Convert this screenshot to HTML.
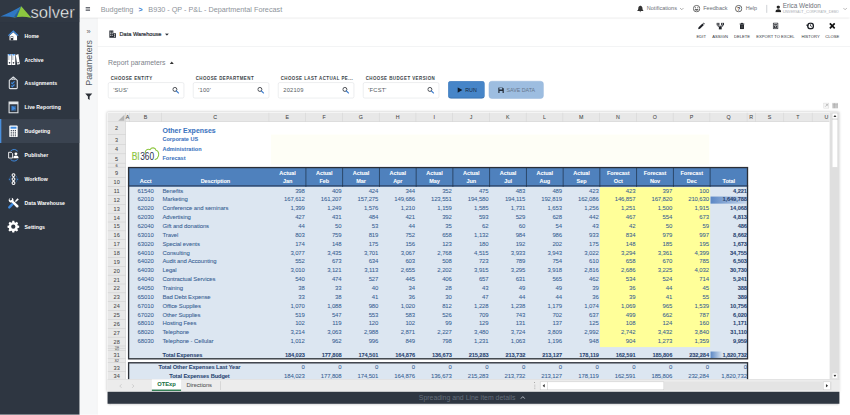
<!DOCTYPE html>
<html><head><meta charset="utf-8"><title>Budgeting</title>
<style>
*{box-sizing:border-box;margin:0;padding:0}
html,body{width:850px;height:415px;overflow:hidden;background:#fff}
body{font-family:"Liberation Sans",sans-serif;}
#root{position:absolute;left:0;top:0;width:1920px;height:937px;transform:scale(0.442708);transform-origin:0 0;background:#fff;overflow:hidden}
#root div,#root svg,#root span{position:absolute}
/* sidebar */
#side{left:0;top:0;width:180px;height:937px;background:#2e3641}
#logo{left:0;top:0;width:180px;height:50px;background:#303843}
.nav{left:0;width:180px;height:54px}
.nav.act{background:#3a4350;box-shadow:inset 3px 0 0 #4a8fdc}
.nav span{left:55.500px;top:0;line-height:55px;font-size:11.700px;font-weight:700;color:#fff;white-space:nowrap}
.nav svg{left:17px;top:14px}
/* top bar */
#top{left:180px;top:0;width:1740px;height:40px;background:#fff;box-shadow:0 1px 5px rgba(0,0,0,.28);z-index:5}
#top span{white-space:nowrap}
.bc{font-size:16.4px;color:#8e939a;top:0;line-height:40px}
.tr{font-size:12.5px;color:#6a6f77;top:0;line-height:39px}
/* params strip */
#strip{left:180px;top:40px;width:40px;height:897px;background:#f6f7f8;border-right:1px solid #ececec}
/* toolbar */
#tbline{left:220px;top:104px;width:1700px;height:1px;background:#e4e6e8}
.tb{font-size:9.4px;color:#30343b;white-space:nowrap;top:76px;line-height:12px;transform:translateX(-50%)}
.tbi{top:49px;transform:translateX(-50%)}
/* params */
.plab{font-size:10px;font-weight:700;letter-spacing:1px;color:#3a3f47;top:171.500px;line-height:12px;white-space:nowrap}
.pin{top:186px;width:172px;height:35.500px;border:1px solid #d6d9dd;border-radius:4px;background:#fff}
.pin span{left:11px;top:0;line-height:34.500px;font-size:13px;letter-spacing:.4px;color:#555b63}
.pin svg{right:10px;top:9px}
/* sheet */
#sheet{-webkit-text-stroke:.12px;left:242px;top:253px;width:1654px;border-left:1px solid #e3e3e3;border-top:1px solid #e3e3e3;background:#fff;box-shadow:0 0 6px rgba(0,0,0,.25)}
#grid{left:0;top:0;width:1631px;height:603.0px;overflow:hidden;background:#fff}
.ch{background:#e8e8e8;border-bottom:1px solid #c8c8c8}
.corner{left:0;top:0;width:41px;height:21px;border-right:1px solid #c8c8c8}
.corner:after{content:"";position:absolute;right:2px;bottom:2.500px;border-left:14.500px solid transparent;border-bottom:14.500px solid #b4b4b4}
.cl{top:0;height:21px;line-height:22.500px;text-align:center;font-size:12px;color:#444;border-right:1px solid #d0d0d0}
.rhbg{left:0;width:41px;background:#e8e8e8;border-right:1px solid #c8c8c8}
.rl{left:0;width:41px;text-align:center;font-size:12.5px;color:#4a4a4a;border-bottom:1px solid #c8c8c8;overflow:hidden}
.rl.sm{font-size:9px}
.t1{font-size:15.8px;font-weight:700;color:#3b74bf;white-space:nowrap;margin-top:2px}
.t2{font-size:12.500px;font-weight:700;color:#3b74bf;white-space:nowrap}
.thead{background:#4f81bd}
.tbody{background:#dce6f1}
.yel{background:#ffff99}
.ht{height:20px;line-height:24.500px;text-align:center;color:#fff;font-weight:700;font-size:12.5px;white-space:nowrap;letter-spacing:-.2px}
.vs{width:1.5px;background:#27405f}
.hline{height:2.500px;background:#1c2940}
.c{height:20px;line-height:18.400px;font-size:13.500px;letter-spacing:-.25px;color:#366092;white-space:nowrap}
.c.ctr{text-align:center}
.c.r{text-align:right}
.c.b{font-weight:700;color:#2a4572;font-size:12.900px;letter-spacing:-.25px}
.c.up{line-height:21.800px}
.c.t31{line-height:21px}
.bar2{background:linear-gradient(90deg,#5b87c5,rgba(197,214,236,0))}
.bar{background:linear-gradient(90deg,#5b87c5,#c5d6ec)}
.tbord{border:3px solid #2b2f36;border-right-width:3px}
/* tabs */
#tabs{left:0;top:603.0px;width:1653px;height:28px;background:#ececec;border-top:1px solid #d0d0d0}
#vs{left:1631px;top:0;width:22px;height:603.0px;background:#dfdfdf}
#dark{left:243px;width:1653px;height:26.500px;background:#2e3641;box-shadow:0 2px 5px rgba(0,0,0,.3)}
</style></head>
<body>
<div id="root">

<!-- sidebar -->
<div id="side">
 <div id="logo">
  <svg style="left:0;top:0" width="180" height="50" viewBox="0 0 180 50">
   <path d="M1 37.500 C16 31 34 22 48 14 L31 39.500 C21 36.500 11 36.800 1 37.500Z" fill="#2f77c4"/>
   <path d="M48 14 L71 40.500 C58 37 44 37.500 31 39.500Z" fill="#8cc63f"/>
   <path d="M48 14 L31 39.500 L38 38.600Z" fill="#1d5ba6"/>
   <text x="69" y="39.800" font-family="Liberation Sans" font-size="38" fill="#fff" stroke="#303843" stroke-width=".9" textLength="100" lengthAdjust="spacingAndGlyphs">solver</text>
  </svg>
 </div>
 <div class="nav" style="top:53px"><svg width="27" height="27" viewBox="0 0 27 27" style="overflow:visible"><path d="M1 12.500L13 1.500l12 11-1.800 2L13 5.200 2.800 14.500z" fill="#3f8be0"/><path d="M4.500 13.500L13 6l8.500 7.500V24h-17z" fill="#fff"/><path d="M7 15h6v9H7z" fill="#2e3641"/><path d="M8 16h4v3H8z" fill="#fff"/></svg><span>Home</span></div>
<div class="nav" style="top:107px"><svg width="27" height="27" viewBox="0 0 27 27" style="overflow:visible"><path d="M0.500 1h8v25h-8zM9.500 1h8v25h-8zM18.500 3l6-1.800 3.500 22.500-6 1.800z" fill="#fff"/><path d="M2 1h5v3.500H2zM11 1h5v3.500h-5z" fill="#3f8be0"/><path d="M2.300 5.500h1.600v9H2.300zM11.300 5.500h1.600v9h-1.600z" fill="#9aa3ad"/><circle cx="4.500" cy="21" r="1.800" fill="#2e3641"/><circle cx="13.500" cy="21" r="1.800" fill="#2e3641"/><circle cx="24" cy="20.500" r="1.600" fill="#2e3641"/></svg><span>Archive</span></div>
<div class="nav" style="top:161px"><svg width="27" height="27" viewBox="0 0 27 27" style="overflow:visible"><path d="M4 6.500L13 -1L22 6.500V23.300Q22 25.200 20.200 25.200H5.800Q4 25.200 4 23.300Z" fill="none" stroke="#dde1e5" stroke-width="2.500" stroke-linejoin="round"/><path d="M7.500 5.500L13 1l5.500 4.500z" fill="#c9ced4"/><circle cx="13" cy="3.800" r="1" fill="#2e3641"/><path d="M8.500 11.500l2.300 2.300 5-5M8.500 18.500l2.300 2.300 5-5" fill="none" stroke="#3f8be0" stroke-width="2.600"/></svg><span>Assignments</span></div>
<div class="nav" style="top:215px"><svg width="27" height="27" viewBox="0 0 27 27" style="overflow:visible"><path d="M3.500 1.500h20v24h-20z" fill="none" stroke="#e4e7ea" stroke-width="2.400"/><path d="M3.500 1.500h20v5h-20z" fill="#e4e7ea"/><path d="M8 10h11v11H8z" fill="#3f8be0" opacity=".55"/><path d="M10.500 10.500l8 5-8 5z" fill="#3f8be0"/></svg><span>Live Reporting</span></div>
<div class="nav act" style="top:269px"><svg width="27" height="27" viewBox="0 0 27 27" style="overflow:visible"><path d="M6 0.500h15c1.200 0 2 .8 2 2v22c0 1.200-.8 2-2 2H6c-1.200 0-2-.8-2-2v-22c0-1.200.8-2 2-2z" fill="#fff"/><path d="M6.800 3.200h13.400v4.600H6.800z" fill="#3f8be0"/><rect x="7.2" y="10.5" width="2.600" height="2.400" fill="#3a4350"/><rect x="11.8" y="10.5" width="2.600" height="2.400" fill="#3a4350"/><rect x="16.4" y="10.5" width="2.600" height="2.400" fill="#3a4350"/><rect x="7.2" y="14.5" width="2.600" height="2.400" fill="#3a4350"/><rect x="11.8" y="14.5" width="2.600" height="2.400" fill="#3a4350"/><rect x="16.4" y="14.5" width="2.600" height="2.400" fill="#3a4350"/><rect x="7.2" y="18.5" width="2.600" height="2.400" fill="#3a4350"/><rect x="11.8" y="18.5" width="2.600" height="2.400" fill="#3a4350"/><rect x="16.4" y="18.5" width="2.600" height="2.400" fill="#3a4350"/><rect x="7.2" y="22.5" width="2.600" height="2.400" fill="#3a4350"/><rect x="11.8" y="22.5" width="2.600" height="2.400" fill="#3a4350"/><rect x="16.4" y="22.5" width="2.600" height="2.400" fill="#3a4350"/></svg><span>Budgeting</span></div>
<div class="nav" style="top:323px"><svg width="27" height="27" viewBox="0 0 27 27" style="overflow:visible"><path d="M2.500 7h6l3 3v10h-9z" fill="none" stroke="#fff" stroke-width="2"/><circle cx="19" cy="10.500" r="3.300" fill="#fff"/><path d="M13 20.500c0-4.500 2.500-6 6-6s6 1.500 6 6z" fill="#fff"/><path d="M7 4A12 12 0 0 1 23 4.500M23 23A12 12 0 0 1 7 23.500" fill="none" stroke="#3f8be0" stroke-width="2.200"/></svg><span>Publisher</span></div>
<div class="nav" style="top:377px"><svg width="27" height="27" viewBox="0 0 27 27" style="overflow:visible"><circle cx="13.500" cy="4.500" r="3.200" fill="none" stroke="#fff" stroke-width="2.400"/><circle cx="13.500" cy="13.500" r="3.200" fill="none" stroke="#fff" stroke-width="2.400"/><circle cx="13.500" cy="22.500" r="3.200" fill="none" stroke="#fff" stroke-width="2.400"/><path d="M13.500 7.700v2.600M13.500 16.700v2.600" stroke="#fff" stroke-width="2"/><path d="M7.500 6.500C5 9 5 18 7.500 20.500M19.500 6.500C22 9 22 18 19.500 20.500" fill="none" stroke="#3f8be0" stroke-width="1.500" stroke-dasharray="2.500 1.500"/><path d="M3 12l3.500 2-3.500 2zM24 12l-3.500 2 3.500 2z" fill="#3f8be0"/></svg><span>Workflow</span></div>
<div class="nav" style="top:431px"><svg width="27" height="27" viewBox="0 0 27 27" style="overflow:visible"><path d="M4 23.500L14 13.500" stroke="#3f8be0" stroke-width="5.500" stroke-linecap="round"/><path d="M7 1.500c-3 .8-5 3.800-4.200 7 .8 3 3.800 4.800 7 4l10 10.500c1.200 1.200 3 1.200 4.200 0s1.200-3 0-4.200L13.500 8.800c.8-3-.800-6-3.800-7l.300 4.500-3.500 1.500-2.200-2.600z" fill="#fff"/><path d="M16.500 9.500l6-6.500 3 2.500-6.500 6z" fill="#fff"/><path d="M14 14.500l3-3" stroke="#fff" stroke-width="2.500"/></svg><span>Data Warehouse</span></div>
<div class="nav" style="top:485px"><svg width="27" height="27" viewBox="0 0 27 27" style="overflow:visible"><path d="M10.800 1h4.400l.7 3.300 2.100.9 2.900-1.900 3.100 3.100-1.900 2.900.9 2.100 3.300.7v4.400l-3.300.7-.9 2.100 1.900 2.900-3.100 3.100-2.900-1.900-2.100.9-.7 3.300h-4.400l-.7-3.300-2.100-.9-2.900 1.900-3.100-3.100 1.900-2.900-.9-2.100L0 16.500v-4.400l3.300-.7.900-2.100-1.900-2.900 3.100-3.100 2.900 1.900 2.100-.9z" fill="#fff" transform="translate(0,-1.300)"/><circle cx="13" cy="13" r="4.800" fill="#2e3641"/></svg><span>Settings</span></div>
</div>

<!-- strip -->
<div id="strip">
 <span style="left:0;top:20px;width:40px;text-align:center;font-size:17px;line-height:24px;color:#666">&raquo;</span>
 <span style="left:20px;top:102px;font-size:20px;color:#575c63;white-space:nowrap;transform:translate(-50%,-50%) rotate(-90deg);line-height:24px">Parameters</span>
 <svg style="left:11.500px;top:170px" width="17" height="17" viewBox="0 0 18 18"><path d="M0.5 1h17L11 8.5V17L7 14V8.5Z" fill="#2b2f36"/></svg>
</div>

<!-- top bar -->
<div id="top">
 <svg style="left:13px;top:15.500px" width="10.500" height="9" viewBox="0 0 10.500 9"><path d="M0 1h10.500M0 4.500h10.500M0 8h10.500" stroke="#4a4f57" stroke-width="1.900"/></svg>
 <span class="bc" style="left:47.5px">Budgeting</span>
 <span class="bc" style="left:133px;top:1.500px;color:#3f7fd0;font-size:16px;font-weight:700">&gt;</span>
 <span class="bc" style="left:155px">B930 - QP - P&amp;L - Departmental Forecast</span>

 <svg style="left:1259px;top:12px" width="15" height="16" viewBox="0 0 15 16"><path d="M7.5 0.5c.8 0 1.3.6 1.3 1.3 2.2.6 3.4 2.5 3.4 5 0 3 1 4.2 2.3 5.2v1H.5v-1c1.300-1 2.300-2.200 2.300-5.200 0-2.500 1.200-4.400 3.400-5 0-.7.500-1.300 1.300-1.300zM5.700 14h3.600c0 1-.800 1.800-1.800 1.800s-1.800-.8-1.800-1.800z" fill="#333"/></svg>
 <span class="tr" style="left:1281px">Notifications</span>
 <svg style="left:1355px;top:17px" width="10" height="7" viewBox="0 0 10 7"><path d="M1 1l4 4 4-4" stroke="#777" stroke-width="1.3" fill="none"/></svg>
 <svg style="left:1385px;top:11px" width="17" height="17" viewBox="0 0 17 17"><circle cx="8.500" cy="8.500" r="7.300" fill="none" stroke="#333" stroke-width="1.600"/><circle cx="5.800" cy="6.500" r="1.200" fill="#333"/><circle cx="11.200" cy="6.500" r="1.200" fill="#333"/><path d="M4.300 9.800c.8 2.200 2.400 3.200 4.200 3.200s3.400-1 4.200-3.200z" fill="#333"/></svg>
 <span class="tr" style="left:1408.500px">Feedback</span>
 <svg style="left:1480px;top:11px" width="17" height="17" viewBox="0 0 17 17"><circle cx="8.500" cy="8.500" r="7.300" fill="none" stroke="#333" stroke-width="1.600"/><text x="8.500" y="12.800" text-anchor="middle" font-family="Liberation Sans" font-weight="700" font-size="12" fill="#333">?</text></svg>
 <span class="tr" style="left:1504.500px">Help</span>
 <div style="left:1551px;top:11px;width:1.500px;height:18px;background:#c9ccd0"></div>
 <svg style="left:1571px;top:12px" width="14" height="16" viewBox="0 0 14 16"><circle cx="7" cy="4" r="3.800" fill="#222"/><path d="M0.500 15.500c0-4.500 2.500-6.500 6.500-6.500s6.500 2 6.500 6.500z" fill="#222"/></svg>
 <span style="left:1588px;top:3px;font-size:14.500px;line-height:20px;color:#6a6f77">Erica Weldon</span>
 <span style="left:1588px;top:21px;font-size:9.600px;line-height:12px;color:#a9adb3;font-variant:small-caps;letter-spacing:0">UniversalT_Corporate_Demo</span>
 <svg style="left:1724px;top:17px" width="10" height="7" viewBox="0 0 10 7"><path d="M1 1l4 4 4-4" stroke="#888" stroke-width="1.300" fill="none"/></svg>
</div>

<!-- toolbar row -->
<svg style="left:246px;top:68px" width="17" height="18" viewBox="0 0 17 18"><path d="M1 1h9v16H1zM10 7h6v10h-6z" fill="#2b2f36"/><path d="M3 3.500h2v2H3zM6.500 3.500h2v2h-2zM3 7h2v2H3zM6.500 7h2v2h-2zM3 10.500h2v2H3zM6.500 10.500h2v2h-2zM12 9.500h2v2h-2zM12 13h2v2h-2z" fill="#fff"/></svg>
<span style="left:270px;top:68px;line-height:19px;font-size:12.700px;font-weight:400;-webkit-text-stroke:.45px;color:#2b2f36;white-space:nowrap">Data Warehouse</span>
<svg style="left:372px;top:75px" width="10" height="6" viewBox="0 0 10 6"><path d="M0.500 0.500h9L5 5.500z" fill="#2b2f36"/></svg>
<div id="tbline"></div>

<!-- toolbar icons -->
<svg class="tbi" style="left:1584px;top:50.500px" width="16" height="16" viewBox="0 0 16 16"><path d="M1 15l1-4.200L10.800 2l3.200 3.200L5.200 14zM11.800 1l.8-.8c.4-.4 1-.4 1.400 0l1.800 1.800c.4.400.4 1 0 1.400l-.8.800z" fill="#1d2026"/></svg>
<svg class="tbi" style="left:1626.500px;top:50.500px" width="18" height="16" viewBox="0 0 18 16"><path d="M0.500 0.500h6.500v5.500H0.500zM11 0.500h6.500v5.500H11zM5.800 10h6.400v5.500H5.800z" fill="#1d2026"/><path d="M3.700 6v2.200h10.600V6M9 8.200V10" fill="none" stroke="#1d2026" stroke-width="2"/><path d="M2.500 2.300h2.500v1.800H2.500zM13 2.300h2.500v1.800H13z" fill="#fff"/></svg>
<svg class="tbi" style="left:1676px;top:51px" width="12" height="15" viewBox="0 0 12 15"><path d="M0.500 2h11v2.200h-11zM4 0.300h4v2H4zM1.500 5h9v8.500c0 .8-.6 1.500-1.400 1.500H2.900c-.8 0-1.400-.7-1.400-1.500z" fill="#1d2026"/><path d="M4.500 6.500v6.500M7.500 6.500v6.500" stroke="#777" stroke-width="1"/></svg>
<svg class="tbi" style="left:1751.500px;top:51px" width="13" height="15" viewBox="0 0 13 15"><path d="M1.200 1h10.600v13H1.200z" fill="#fff" stroke="#1d2026" stroke-width="2"/><path d="M3 3h7v1.800H3zM3 6.500h7v6H3z" fill="#1d2026"/><path d="M4.800 8l3.400 3M8.200 8l-3.400 3" stroke="#fff" stroke-width="1.200"/></svg>
<svg class="tbi" style="left:1830px;top:50px" width="19" height="17" viewBox="0 0 19 17"><circle cx="10.500" cy="8.500" r="6.400" fill="none" stroke="#1d2026" stroke-width="3"/><path d="M0 6h6.500L3.300 10.500z" fill="#1d2026"/><path d="M10.500 5V8.800l2.600 1.600" fill="none" stroke="#1d2026" stroke-width="1.900"/></svg>
<svg class="tbi" style="left:1880px;top:51px" width="15" height="15" viewBox="0 0 15 15"><path d="M2 2l11 11M13 2L2 13" stroke="#111" stroke-width="3.800"/></svg>
<span class="tb" style="left:1584px">EDIT</span>
<span class="tb" style="left:1626.500px">ASSIGN</span>
<span class="tb" style="left:1676px">DELETE</span>
<span class="tb" style="left:1751.500px">EXPORT TO EXCEL</span>
<span class="tb" style="left:1831px">HISTORY</span>
<span class="tb" style="left:1880px">CLOSE</span>

<!-- report parameters -->
<span style="left:244px;top:131px;line-height:21px;font-size:15.600px;color:#7d828a;white-space:nowrap">Report parameters</span>
<svg style="left:383px;top:138px" width="10" height="7" viewBox="0 0 10 7"><path d="M0.500 6.500h9L5 1z" fill="#333"/></svg>
<span class="plab" style="left:250px">CHOOSE ENTITY</span>
<div class="pin" style="left:244px"><span>'SUS'</span><svg width="16" height="16" viewBox="0 0 16 16"><circle cx="6" cy="6" r="4.500" fill="none" stroke="#2b2f36" stroke-width="1.900"/><path d="M9.500 9.500l5 5" stroke="#3f7fd0" stroke-width="2.600" stroke-linecap="round"/></svg></div>
<span class="plab" style="left:442px">CHOOSE DEPARTMENT</span>
<div class="pin" style="left:436px"><span>'100'</span><svg width="16" height="16" viewBox="0 0 16 16"><circle cx="6" cy="6" r="4.500" fill="none" stroke="#2b2f36" stroke-width="1.900"/><path d="M9.500 9.500l5 5" stroke="#3f7fd0" stroke-width="2.600" stroke-linecap="round"/></svg></div>
<span class="plab" style="left:634px">CHOOSE LAST ACTUAL PE...</span>
<div class="pin" style="left:628px"><span>202109</span><svg width="16" height="16" viewBox="0 0 16 16"><circle cx="6" cy="6" r="4.500" fill="none" stroke="#2b2f36" stroke-width="1.900"/><path d="M9.500 9.500l5 5" stroke="#3f7fd0" stroke-width="2.600" stroke-linecap="round"/></svg></div>
<span class="plab" style="left:826px">CHOOSE BUDGET VERSION</span>
<div class="pin" style="left:820px"><span>'FCST'</span><svg width="16" height="16" viewBox="0 0 16 16"><circle cx="6" cy="6" r="4.500" fill="none" stroke="#2b2f36" stroke-width="1.900"/><path d="M9.500 9.500l5 5" stroke="#3f7fd0" stroke-width="2.600" stroke-linecap="round"/></svg></div>
<div style="left:1012px;top:183px;width:83px;height:40px;border-radius:7px;background:#4685c8;border:1.500px solid #3b78bb;border-bottom:2.500px solid #3068a8">
 <svg style="left:20px;top:12.500px" width="12" height="13" viewBox="0 0 12 13"><path d="M0.500 0.300l11 6.200-11 6.200z" fill="#0d1a2b"/></svg>
 <span style="left:38px;top:0;line-height:40px;font-size:12px;color:#14253b">RUN</span>
</div>
<div style="left:1104px;top:183px;width:124px;height:40px;border-radius:7px;background:#9dbde0;border:1.500px solid #93b5da">
 <svg style="left:20px;top:12.500px" width="13.500" height="13.500" viewBox="0 0 13 13"><path d="M0.500 0.500h9.500l2.500 2.500v9.500H0.500z" fill="#252d38"/><path d="M3 1.500h6v3.500H3zM3.200 8.500h6.600v4H3.200z" fill="#9dbde0"/></svg>
 <span style="left:39px;top:0;line-height:40px;font-size:12px;color:#66768b;white-space:nowrap">SAVE DATA</span>
</div>

<!-- small icons above sheet -->
<svg style="left:1859.500px;top:232px" width="13" height="13" viewBox="0 0 13 13"><rect x="0.500" y="0.500" width="12" height="12" fill="#f4f4f4" stroke="#bdbdbd"/><path d="M4 9l5-5M6 4h3v3" stroke="#8a8a8a" fill="none"/></svg>
<svg style="left:1880px;top:232px" width="13" height="13" viewBox="0 0 13 13"><rect x="0.500" y="0.500" width="12" height="12" fill="#d9d9d9" stroke="#b5b5b5"/><path d="M0.500 4h12M0.500 7h12M0.500 10h12M4.500 0.500v12" stroke="#9a9a9a"/></svg>

<!-- sheet -->
<div id="sheet" style="height:calc(603.0px + 29px)">
 <div id="grid">
<div class="ch" style="left:0;top:0;width:1631px;height:21px"></div>
<div class="corner"></div>
<div class="cl" style="left:41px;width:9px">A</div>
<div class="cl" style="left:50px;width:72px">B</div>
<div class="cl" style="left:122px;width:243px">C</div>
<div class="cl" style="left:365px;width:83px">E</div>
<div class="cl" style="left:448px;width:83px">F</div>
<div class="cl" style="left:531px;width:83px">G</div>
<div class="cl" style="left:614px;width:83px">H</div>
<div class="cl" style="left:697px;width:83px">I</div>
<div class="cl" style="left:780px;width:83px">J</div>
<div class="cl" style="left:863px;width:83px">K</div>
<div class="cl" style="left:946px;width:83px">L</div>
<div class="cl" style="left:1029px;width:83px">M</div>
<div class="cl" style="left:1112px;width:83px">N</div>
<div class="cl" style="left:1195px;width:83px">O</div>
<div class="cl" style="left:1278px;width:83px">P</div>
<div class="cl" style="left:1361px;width:84px">Q</div>
<div class="cl" style="left:1445px;width:19px">R</div>
<div class="cl" style="left:1464px;width:64px">S</div>
<div class="cl" style="left:1528px;width:64px">T</div>
<div class="cl" style="left:1592px;width:64px">U</div>
<div class="rhbg" style="top:21px;height:582.0px"></div>
<div class="rl" style="top:21px;height:28.5px;line-height:31.5px">2</div>
<div class="rl" style="top:49.5px;height:23px;line-height:24px">3</div>
<div class="rl" style="top:72.5px;height:21px;line-height:22px">4</div>
<div class="rl" style="top:93.5px;height:21.5px;line-height:22.5px">5</div>
<div class="rl sm" style="top:115.0px;height:9px;line-height:10px">6</div>
<div class="rl" style="top:124.0px;height:23px;line-height:27.5px">9</div>
<div class="rl" style="top:147.0px;height:20.5px;line-height:20.5px">10</div>
<div class="rl" style="top:167.5px;height:20px;line-height:20px">11</div>
<div class="rl" style="top:187.5px;height:20px;line-height:20px">12</div>
<div class="rl" style="top:207.5px;height:20px;line-height:20px">13</div>
<div class="rl" style="top:227.5px;height:20px;line-height:20px">14</div>
<div class="rl" style="top:247.5px;height:20px;line-height:20px">15</div>
<div class="rl" style="top:267.5px;height:20px;line-height:20px">16</div>
<div class="rl" style="top:287.5px;height:20px;line-height:20px">17</div>
<div class="rl" style="top:307.5px;height:20px;line-height:20px">18</div>
<div class="rl" style="top:327.5px;height:20px;line-height:20px">19</div>
<div class="rl" style="top:347.5px;height:20px;line-height:20px">20</div>
<div class="rl" style="top:367.5px;height:20px;line-height:20px">21</div>
<div class="rl" style="top:387.5px;height:20px;line-height:20px">22</div>
<div class="rl" style="top:407.5px;height:20px;line-height:20px">23</div>
<div class="rl" style="top:427.5px;height:20px;line-height:20px">24</div>
<div class="rl" style="top:447.5px;height:20px;line-height:20px">25</div>
<div class="rl" style="top:467.5px;height:20px;line-height:20px">26</div>
<div class="rl" style="top:487.5px;height:20px;line-height:20px">27</div>
<div class="rl" style="top:507.5px;height:20px;line-height:20px">28</div>
<div class="rl sm" style="top:527.5px;height:5px;line-height:6px">29</div>
<div class="rl sm" style="top:532.5px;height:5px;line-height:6px">30</div>
<div class="rl" style="top:537.5px;height:19px;line-height:21.5px">31</div>
<div class="rl sm" style="top:556.5px;height:8.5px;line-height:9.5px">32</div>
<div class="rl" style="top:565.0px;height:19.5px;line-height:25.0px">33</div>
<div class="rl" style="top:584.5px;height:18.5px;line-height:22.0px">34</div>
<div style="position:absolute;left:369px;top:49.5px;width:990px;height:68.5px;background:#fefef6"></div>
<div class="t1" style="left:124px;top:21px;height:28.5px;line-height:35.5px">Other Expenses</div>
<div class="t2" style="left:124px;top:49.5px;height:23px;line-height:20.5px">Corporate US</div>
<div class="t2" style="left:124px;top:72.5px;height:21px;line-height:18.5px">Administration</div>
<div class="t2" style="left:124px;top:93.5px;height:21.5px;line-height:19.0px">Forecast</div>
<svg style="position:absolute;left:50px;top:76px" width="72" height="34" viewBox="50 76 72 34">
<path d="M85 91.500 C84.500 85.500 90 81.500 96 84 C99 78.500 107.500 78.500 109.500 85.500 C114.500 86.500 116.500 92 115 98 C114 102 111.500 105 107.500 106.300" fill="none" stroke="#8dc63f" stroke-width="2.400" stroke-linecap="round"/>
<text x="54.600" y="106.900" font-family="Liberation Sans" font-size="22.800" fill="#8dc63f" stroke="#8dc63f" stroke-width=".5" textLength="18" lengthAdjust="spacingAndGlyphs">BI</text>
<text x="73.600" y="106.900" font-family="Liberation Sans" font-size="22.800" fill="#27324d" textLength="31.500" lengthAdjust="spacingAndGlyphs">360</text>
</svg>
<div class="thead" style="left:46px;top:124.0px;width:1400px;height:43.5px"></div>
<div class="tbody" style="left:46px;top:167.5px;width:1401px;height:389.0px"></div>
<div class="yel" style="left:1112px;top:168.5px;width:249px;height:361.0px"></div>
<div class="ht" style="left:50px;top:144.0px;width:72px">Acct</div>
<div class="ht" style="left:122px;top:144.0px;width:243px">Description</div>
<div class="ht" style="left:365px;top:125.0px;width:83px">Actual</div>
<div class="ht" style="left:365px;top:144.0px;width:83px">Jan</div>
<div class="vs" style="left:447px;top:124.0px;height:43.5px"></div>
<div class="ht" style="left:448px;top:125.0px;width:83px">Actual</div>
<div class="ht" style="left:448px;top:144.0px;width:83px">Feb</div>
<div class="vs" style="left:530px;top:124.0px;height:43.5px"></div>
<div class="ht" style="left:531px;top:125.0px;width:83px">Actual</div>
<div class="ht" style="left:531px;top:144.0px;width:83px">Mar</div>
<div class="vs" style="left:613px;top:124.0px;height:43.5px"></div>
<div class="ht" style="left:614px;top:125.0px;width:83px">Actual</div>
<div class="ht" style="left:614px;top:144.0px;width:83px">Apr</div>
<div class="vs" style="left:696px;top:124.0px;height:43.5px"></div>
<div class="ht" style="left:697px;top:125.0px;width:83px">Actual</div>
<div class="ht" style="left:697px;top:144.0px;width:83px">May</div>
<div class="vs" style="left:779px;top:124.0px;height:43.5px"></div>
<div class="ht" style="left:780px;top:125.0px;width:83px">Actual</div>
<div class="ht" style="left:780px;top:144.0px;width:83px">Jun</div>
<div class="vs" style="left:862px;top:124.0px;height:43.5px"></div>
<div class="ht" style="left:863px;top:125.0px;width:83px">Actual</div>
<div class="ht" style="left:863px;top:144.0px;width:83px">Jul</div>
<div class="vs" style="left:945px;top:124.0px;height:43.5px"></div>
<div class="ht" style="left:946px;top:125.0px;width:83px">Actual</div>
<div class="ht" style="left:946px;top:144.0px;width:83px">Aug</div>
<div class="vs" style="left:1028px;top:124.0px;height:43.5px"></div>
<div class="ht" style="left:1029px;top:125.0px;width:83px">Actual</div>
<div class="ht" style="left:1029px;top:144.0px;width:83px">Sep</div>
<div class="vs" style="left:1111px;top:124.0px;height:43.5px"></div>
<div class="ht" style="left:1112px;top:125.0px;width:83px">Forecast</div>
<div class="ht" style="left:1112px;top:144.0px;width:83px">Oct</div>
<div class="vs" style="left:1194px;top:124.0px;height:43.5px"></div>
<div class="ht" style="left:1195px;top:125.0px;width:83px">Forecast</div>
<div class="ht" style="left:1195px;top:144.0px;width:83px">Nov</div>
<div class="vs" style="left:1277px;top:124.0px;height:43.5px"></div>
<div class="ht" style="left:1278px;top:125.0px;width:83px">Forecast</div>
<div class="ht" style="left:1278px;top:144.0px;width:83px">Dec</div>
<div class="vs" style="left:1360px;top:124.0px;height:43.5px"></div>
<div class="ht" style="left:1361px;top:144.0px;width:84px">Total</div>
<div class="hline" style="left:46px;top:164.5px;width:1401px"></div>
<div class="c ctr" style="left:50px;top:167.5px;width:72px">61540</div>
<div class="c" style="left:124px;top:167.5px">Benefits</div>
<div class="c r" style="left:365px;top:167.5px;width:80.5px">398</div>
<div class="c r" style="left:448px;top:167.5px;width:80.5px">409</div>
<div class="c r" style="left:531px;top:167.5px;width:80.5px">424</div>
<div class="c r" style="left:614px;top:167.5px;width:80.5px">344</div>
<div class="c r" style="left:697px;top:167.5px;width:80.5px">352</div>
<div class="c r" style="left:780px;top:167.5px;width:80.5px">475</div>
<div class="c r" style="left:863px;top:167.5px;width:80.5px">483</div>
<div class="c r" style="left:946px;top:167.5px;width:80.5px">489</div>
<div class="c r" style="left:1029px;top:167.5px;width:80.5px">423</div>
<div class="c r" style="left:1112px;top:167.5px;width:80.5px">423</div>
<div class="c r" style="left:1195px;top:167.5px;width:80.5px">397</div>
<div class="c r" style="left:1278px;top:167.5px;width:80.5px">100</div>
<div class="c r b" style="left:1361px;top:167.5px;width:83px">4,221</div>
<div class="c ctr" style="left:50px;top:187.5px;width:72px">62010</div>
<div class="c" style="left:124px;top:187.5px">Marketing</div>
<div class="c r" style="left:365px;top:187.5px;width:80.5px">167,612</div>
<div class="c r" style="left:448px;top:187.5px;width:80.5px">161,207</div>
<div class="c r" style="left:531px;top:187.5px;width:80.5px">157,275</div>
<div class="c r" style="left:614px;top:187.5px;width:80.5px">149,686</div>
<div class="c r" style="left:697px;top:187.5px;width:80.5px">123,551</div>
<div class="c r" style="left:780px;top:187.5px;width:80.5px">194,580</div>
<div class="c r" style="left:863px;top:187.5px;width:80.5px">194,115</div>
<div class="c r" style="left:946px;top:187.5px;width:80.5px">192,819</div>
<div class="c r" style="left:1029px;top:187.5px;width:80.5px">162,086</div>
<div class="c r" style="left:1112px;top:187.5px;width:80.5px">146,857</div>
<div class="c r" style="left:1195px;top:187.5px;width:80.5px">167,820</div>
<div class="c r" style="left:1278px;top:187.5px;width:80.5px">210,630</div>
<div class="bar" style="left:1362px;top:189.5px;width:81.0px;height:16px"></div>
<div class="c r b" style="left:1361px;top:187.5px;width:83px">1,649,788</div>
<div class="c ctr" style="left:50px;top:207.5px;width:72px">62020</div>
<div class="c" style="left:124px;top:207.5px">Conference and seminars</div>
<div class="c r" style="left:365px;top:207.5px;width:80.5px">1,399</div>
<div class="c r" style="left:448px;top:207.5px;width:80.5px">1,249</div>
<div class="c r" style="left:531px;top:207.5px;width:80.5px">1,576</div>
<div class="c r" style="left:614px;top:207.5px;width:80.5px">1,210</div>
<div class="c r" style="left:697px;top:207.5px;width:80.5px">1,159</div>
<div class="c r" style="left:780px;top:207.5px;width:80.5px">1,585</div>
<div class="c r" style="left:863px;top:207.5px;width:80.5px">1,731</div>
<div class="c r" style="left:946px;top:207.5px;width:80.5px">1,653</div>
<div class="c r" style="left:1029px;top:207.5px;width:80.5px">1,256</div>
<div class="c r" style="left:1112px;top:207.5px;width:80.5px">1,251</div>
<div class="c r" style="left:1195px;top:207.5px;width:80.5px">1,500</div>
<div class="c r" style="left:1278px;top:207.5px;width:80.5px">1,915</div>
<div class="c r b" style="left:1361px;top:207.5px;width:83px">14,068</div>
<div class="c ctr" style="left:50px;top:227.5px;width:72px">62030</div>
<div class="c" style="left:124px;top:227.5px">Advertising</div>
<div class="c r" style="left:365px;top:227.5px;width:80.5px">427</div>
<div class="c r" style="left:448px;top:227.5px;width:80.5px">431</div>
<div class="c r" style="left:531px;top:227.5px;width:80.5px">484</div>
<div class="c r" style="left:614px;top:227.5px;width:80.5px">421</div>
<div class="c r" style="left:697px;top:227.5px;width:80.5px">392</div>
<div class="c r" style="left:780px;top:227.5px;width:80.5px">593</div>
<div class="c r" style="left:863px;top:227.5px;width:80.5px">529</div>
<div class="c r" style="left:946px;top:227.5px;width:80.5px">628</div>
<div class="c r" style="left:1029px;top:227.5px;width:80.5px">442</div>
<div class="c r" style="left:1112px;top:227.5px;width:80.5px">467</div>
<div class="c r" style="left:1195px;top:227.5px;width:80.5px">554</div>
<div class="c r" style="left:1278px;top:227.5px;width:80.5px">673</div>
<div class="c r b" style="left:1361px;top:227.5px;width:83px">4,813</div>
<div class="c ctr" style="left:50px;top:247.5px;width:72px">62040</div>
<div class="c" style="left:124px;top:247.5px">Gift and donations</div>
<div class="c r" style="left:365px;top:247.5px;width:80.5px">44</div>
<div class="c r" style="left:448px;top:247.5px;width:80.5px">50</div>
<div class="c r" style="left:531px;top:247.5px;width:80.5px">53</div>
<div class="c r" style="left:614px;top:247.5px;width:80.5px">44</div>
<div class="c r" style="left:697px;top:247.5px;width:80.5px">35</div>
<div class="c r" style="left:780px;top:247.5px;width:80.5px">62</div>
<div class="c r" style="left:863px;top:247.5px;width:80.5px">60</div>
<div class="c r" style="left:946px;top:247.5px;width:80.5px">54</div>
<div class="c r" style="left:1029px;top:247.5px;width:80.5px">43</div>
<div class="c r" style="left:1112px;top:247.5px;width:80.5px">42</div>
<div class="c r" style="left:1195px;top:247.5px;width:80.5px">50</div>
<div class="c r" style="left:1278px;top:247.5px;width:80.5px">59</div>
<div class="c r b" style="left:1361px;top:247.5px;width:83px">486</div>
<div class="c ctr" style="left:50px;top:267.5px;width:72px">63010</div>
<div class="c" style="left:124px;top:267.5px">Travel</div>
<div class="c r" style="left:365px;top:267.5px;width:80.5px">803</div>
<div class="c r" style="left:448px;top:267.5px;width:80.5px">759</div>
<div class="c r" style="left:531px;top:267.5px;width:80.5px">819</div>
<div class="c r" style="left:614px;top:267.5px;width:80.5px">752</div>
<div class="c r" style="left:697px;top:267.5px;width:80.5px">658</div>
<div class="c r" style="left:780px;top:267.5px;width:80.5px">1,132</div>
<div class="c r" style="left:863px;top:267.5px;width:80.5px">984</div>
<div class="c r" style="left:946px;top:267.5px;width:80.5px">986</div>
<div class="c r" style="left:1029px;top:267.5px;width:80.5px">933</div>
<div class="c r" style="left:1112px;top:267.5px;width:80.5px">834</div>
<div class="c r" style="left:1195px;top:267.5px;width:80.5px">979</div>
<div class="c r" style="left:1278px;top:267.5px;width:80.5px">997</div>
<div class="c r b" style="left:1361px;top:267.5px;width:83px">8,662</div>
<div class="c ctr" style="left:50px;top:287.5px;width:72px">63020</div>
<div class="c" style="left:124px;top:287.5px">Special events</div>
<div class="c r" style="left:365px;top:287.5px;width:80.5px">174</div>
<div class="c r" style="left:448px;top:287.5px;width:80.5px">148</div>
<div class="c r" style="left:531px;top:287.5px;width:80.5px">175</div>
<div class="c r" style="left:614px;top:287.5px;width:80.5px">156</div>
<div class="c r" style="left:697px;top:287.5px;width:80.5px">123</div>
<div class="c r" style="left:780px;top:287.5px;width:80.5px">180</div>
<div class="c r" style="left:863px;top:287.5px;width:80.5px">192</div>
<div class="c r" style="left:946px;top:287.5px;width:80.5px">202</div>
<div class="c r" style="left:1029px;top:287.5px;width:80.5px">175</div>
<div class="c r" style="left:1112px;top:287.5px;width:80.5px">148</div>
<div class="c r" style="left:1195px;top:287.5px;width:80.5px">185</div>
<div class="c r" style="left:1278px;top:287.5px;width:80.5px">195</div>
<div class="c r b" style="left:1361px;top:287.5px;width:83px">1,673</div>
<div class="c ctr" style="left:50px;top:307.5px;width:72px">64010</div>
<div class="c" style="left:124px;top:307.5px">Consulting</div>
<div class="c r" style="left:365px;top:307.5px;width:80.5px">3,077</div>
<div class="c r" style="left:448px;top:307.5px;width:80.5px">3,435</div>
<div class="c r" style="left:531px;top:307.5px;width:80.5px">3,701</div>
<div class="c r" style="left:614px;top:307.5px;width:80.5px">3,067</div>
<div class="c r" style="left:697px;top:307.5px;width:80.5px">2,768</div>
<div class="c r" style="left:780px;top:307.5px;width:80.5px">4,515</div>
<div class="c r" style="left:863px;top:307.5px;width:80.5px">3,933</div>
<div class="c r" style="left:946px;top:307.5px;width:80.5px">3,943</div>
<div class="c r" style="left:1029px;top:307.5px;width:80.5px">3,022</div>
<div class="c r" style="left:1112px;top:307.5px;width:80.5px">3,294</div>
<div class="c r" style="left:1195px;top:307.5px;width:80.5px">3,361</div>
<div class="c r" style="left:1278px;top:307.5px;width:80.5px">4,399</div>
<div class="c r b" style="left:1361px;top:307.5px;width:83px">34,755</div>
<div class="c ctr" style="left:50px;top:327.5px;width:72px">64020</div>
<div class="c" style="left:124px;top:327.5px">Audit and Accounting</div>
<div class="c r" style="left:365px;top:327.5px;width:80.5px">552</div>
<div class="c r" style="left:448px;top:327.5px;width:80.5px">673</div>
<div class="c r" style="left:531px;top:327.5px;width:80.5px">634</div>
<div class="c r" style="left:614px;top:327.5px;width:80.5px">603</div>
<div class="c r" style="left:697px;top:327.5px;width:80.5px">508</div>
<div class="c r" style="left:780px;top:327.5px;width:80.5px">723</div>
<div class="c r" style="left:863px;top:327.5px;width:80.5px">789</div>
<div class="c r" style="left:946px;top:327.5px;width:80.5px">754</div>
<div class="c r" style="left:1029px;top:327.5px;width:80.5px">610</div>
<div class="c r" style="left:1112px;top:327.5px;width:80.5px">658</div>
<div class="c r" style="left:1195px;top:327.5px;width:80.5px">670</div>
<div class="c r" style="left:1278px;top:327.5px;width:80.5px">785</div>
<div class="c r b" style="left:1361px;top:327.5px;width:83px">6,503</div>
<div class="c ctr" style="left:50px;top:347.5px;width:72px">64030</div>
<div class="c" style="left:124px;top:347.5px">Legal</div>
<div class="c r" style="left:365px;top:347.5px;width:80.5px">3,010</div>
<div class="c r" style="left:448px;top:347.5px;width:80.5px">3,121</div>
<div class="c r" style="left:531px;top:347.5px;width:80.5px">3,113</div>
<div class="c r" style="left:614px;top:347.5px;width:80.5px">2,655</div>
<div class="c r" style="left:697px;top:347.5px;width:80.5px">2,202</div>
<div class="c r" style="left:780px;top:347.5px;width:80.5px">3,915</div>
<div class="c r" style="left:863px;top:347.5px;width:80.5px">3,295</div>
<div class="c r" style="left:946px;top:347.5px;width:80.5px">3,918</div>
<div class="c r" style="left:1029px;top:347.5px;width:80.5px">2,816</div>
<div class="c r" style="left:1112px;top:347.5px;width:80.5px">2,686</div>
<div class="c r" style="left:1195px;top:347.5px;width:80.5px">3,225</div>
<div class="c r" style="left:1278px;top:347.5px;width:80.5px">4,032</div>
<div class="c r b" style="left:1361px;top:347.5px;width:83px">30,730</div>
<div class="c ctr" style="left:50px;top:367.5px;width:72px">64040</div>
<div class="c" style="left:124px;top:367.5px">Contractual Services</div>
<div class="c r" style="left:365px;top:367.5px;width:80.5px">540</div>
<div class="c r" style="left:448px;top:367.5px;width:80.5px">474</div>
<div class="c r" style="left:531px;top:367.5px;width:80.5px">527</div>
<div class="c r" style="left:614px;top:367.5px;width:80.5px">445</div>
<div class="c r" style="left:697px;top:367.5px;width:80.5px">406</div>
<div class="c r" style="left:780px;top:367.5px;width:80.5px">657</div>
<div class="c r" style="left:863px;top:367.5px;width:80.5px">631</div>
<div class="c r" style="left:946px;top:367.5px;width:80.5px">565</div>
<div class="c r" style="left:1029px;top:367.5px;width:80.5px">462</div>
<div class="c r" style="left:1112px;top:367.5px;width:80.5px">534</div>
<div class="c r" style="left:1195px;top:367.5px;width:80.5px">524</div>
<div class="c r" style="left:1278px;top:367.5px;width:80.5px">714</div>
<div class="c r b" style="left:1361px;top:367.5px;width:83px">5,241</div>
<div class="c ctr" style="left:50px;top:387.5px;width:72px">64050</div>
<div class="c" style="left:124px;top:387.5px">Training</div>
<div class="c r" style="left:365px;top:387.5px;width:80.5px">38</div>
<div class="c r" style="left:448px;top:387.5px;width:80.5px">33</div>
<div class="c r" style="left:531px;top:387.5px;width:80.5px">40</div>
<div class="c r" style="left:614px;top:387.5px;width:80.5px">34</div>
<div class="c r" style="left:697px;top:387.5px;width:80.5px">28</div>
<div class="c r" style="left:780px;top:387.5px;width:80.5px">43</div>
<div class="c r" style="left:863px;top:387.5px;width:80.5px">49</div>
<div class="c r" style="left:946px;top:387.5px;width:80.5px">49</div>
<div class="c r" style="left:1029px;top:387.5px;width:80.5px">39</div>
<div class="c r" style="left:1112px;top:387.5px;width:80.5px">36</div>
<div class="c r" style="left:1195px;top:387.5px;width:80.5px">44</div>
<div class="c r" style="left:1278px;top:387.5px;width:80.5px">45</div>
<div class="c r b" style="left:1361px;top:387.5px;width:83px">388</div>
<div class="c ctr" style="left:50px;top:407.5px;width:72px">65010</div>
<div class="c" style="left:124px;top:407.5px">Bad Debt Expense</div>
<div class="c r" style="left:365px;top:407.5px;width:80.5px">33</div>
<div class="c r" style="left:448px;top:407.5px;width:80.5px">38</div>
<div class="c r" style="left:531px;top:407.5px;width:80.5px">41</div>
<div class="c r" style="left:614px;top:407.5px;width:80.5px">36</div>
<div class="c r" style="left:697px;top:407.5px;width:80.5px">30</div>
<div class="c r" style="left:780px;top:407.5px;width:80.5px">47</div>
<div class="c r" style="left:863px;top:407.5px;width:80.5px">44</div>
<div class="c r" style="left:946px;top:407.5px;width:80.5px">44</div>
<div class="c r" style="left:1029px;top:407.5px;width:80.5px">36</div>
<div class="c r" style="left:1112px;top:407.5px;width:80.5px">39</div>
<div class="c r" style="left:1195px;top:407.5px;width:80.5px">41</div>
<div class="c r" style="left:1278px;top:407.5px;width:80.5px">55</div>
<div class="c r b" style="left:1361px;top:407.5px;width:83px">389</div>
<div class="c ctr" style="left:50px;top:427.5px;width:72px">67010</div>
<div class="c" style="left:124px;top:427.5px">Office Supplies</div>
<div class="c r" style="left:365px;top:427.5px;width:80.5px">1,070</div>
<div class="c r" style="left:448px;top:427.5px;width:80.5px">1,088</div>
<div class="c r" style="left:531px;top:427.5px;width:80.5px">980</div>
<div class="c r" style="left:614px;top:427.5px;width:80.5px">1,020</div>
<div class="c r" style="left:697px;top:427.5px;width:80.5px">812</div>
<div class="c r" style="left:780px;top:427.5px;width:80.5px">1,228</div>
<div class="c r" style="left:863px;top:427.5px;width:80.5px">1,238</div>
<div class="c r" style="left:946px;top:427.5px;width:80.5px">1,179</div>
<div class="c r" style="left:1029px;top:427.5px;width:80.5px">1,074</div>
<div class="c r" style="left:1112px;top:427.5px;width:80.5px">1,069</div>
<div class="c r" style="left:1195px;top:427.5px;width:80.5px">965</div>
<div class="c r" style="left:1278px;top:427.5px;width:80.5px">1,539</div>
<div class="c r b" style="left:1361px;top:427.5px;width:83px">10,756</div>
<div class="c ctr" style="left:50px;top:447.5px;width:72px">67020</div>
<div class="c" style="left:124px;top:447.5px">Other Supplies</div>
<div class="c r" style="left:365px;top:447.5px;width:80.5px">519</div>
<div class="c r" style="left:448px;top:447.5px;width:80.5px">547</div>
<div class="c r" style="left:531px;top:447.5px;width:80.5px">553</div>
<div class="c r" style="left:614px;top:447.5px;width:80.5px">583</div>
<div class="c r" style="left:697px;top:447.5px;width:80.5px">526</div>
<div class="c r" style="left:780px;top:447.5px;width:80.5px">709</div>
<div class="c r" style="left:863px;top:447.5px;width:80.5px">743</div>
<div class="c r" style="left:946px;top:447.5px;width:80.5px">702</div>
<div class="c r" style="left:1029px;top:447.5px;width:80.5px">637</div>
<div class="c r" style="left:1112px;top:447.5px;width:80.5px">499</div>
<div class="c r" style="left:1195px;top:447.5px;width:80.5px">662</div>
<div class="c r" style="left:1278px;top:447.5px;width:80.5px">787</div>
<div class="c r b" style="left:1361px;top:447.5px;width:83px">6,020</div>
<div class="c ctr" style="left:50px;top:467.5px;width:72px">68010</div>
<div class="c" style="left:124px;top:467.5px">Hosting Fees</div>
<div class="c r" style="left:365px;top:467.5px;width:80.5px">102</div>
<div class="c r" style="left:448px;top:467.5px;width:80.5px">119</div>
<div class="c r" style="left:531px;top:467.5px;width:80.5px">120</div>
<div class="c r" style="left:614px;top:467.5px;width:80.5px">102</div>
<div class="c r" style="left:697px;top:467.5px;width:80.5px">99</div>
<div class="c r" style="left:780px;top:467.5px;width:80.5px">129</div>
<div class="c r" style="left:863px;top:467.5px;width:80.5px">131</div>
<div class="c r" style="left:946px;top:467.5px;width:80.5px">137</div>
<div class="c r" style="left:1029px;top:467.5px;width:80.5px">125</div>
<div class="c r" style="left:1112px;top:467.5px;width:80.5px">108</div>
<div class="c r" style="left:1195px;top:467.5px;width:80.5px">124</div>
<div class="c r" style="left:1278px;top:467.5px;width:80.5px">160</div>
<div class="c r b" style="left:1361px;top:467.5px;width:83px">1,171</div>
<div class="c ctr" style="left:50px;top:487.5px;width:72px">68020</div>
<div class="c" style="left:124px;top:487.5px">Telephone</div>
<div class="c r" style="left:365px;top:487.5px;width:80.5px">3,214</div>
<div class="c r" style="left:448px;top:487.5px;width:80.5px">3,063</div>
<div class="c r" style="left:531px;top:487.5px;width:80.5px">2,988</div>
<div class="c r" style="left:614px;top:487.5px;width:80.5px">2,871</div>
<div class="c r" style="left:697px;top:487.5px;width:80.5px">2,227</div>
<div class="c r" style="left:780px;top:487.5px;width:80.5px">3,480</div>
<div class="c r" style="left:863px;top:487.5px;width:80.5px">3,724</div>
<div class="c r" style="left:946px;top:487.5px;width:80.5px">3,809</div>
<div class="c r" style="left:1029px;top:487.5px;width:80.5px">2,992</div>
<div class="c r" style="left:1112px;top:487.5px;width:80.5px">2,742</div>
<div class="c r" style="left:1195px;top:487.5px;width:80.5px">3,432</div>
<div class="c r" style="left:1278px;top:487.5px;width:80.5px">3,840</div>
<div class="c r b" style="left:1361px;top:487.5px;width:83px">31,110</div>
<div class="c ctr" style="left:50px;top:507.5px;width:72px">68030</div>
<div class="c" style="left:124px;top:507.5px">Telephone - Cellular</div>
<div class="c r" style="left:365px;top:507.5px;width:80.5px">1,012</div>
<div class="c r" style="left:448px;top:507.5px;width:80.5px">962</div>
<div class="c r" style="left:531px;top:507.5px;width:80.5px">996</div>
<div class="c r" style="left:614px;top:507.5px;width:80.5px">849</div>
<div class="c r" style="left:697px;top:507.5px;width:80.5px">798</div>
<div class="c r" style="left:780px;top:507.5px;width:80.5px">1,231</div>
<div class="c r" style="left:863px;top:507.5px;width:80.5px">1,063</div>
<div class="c r" style="left:946px;top:507.5px;width:80.5px">1,196</div>
<div class="c r" style="left:1029px;top:507.5px;width:80.5px">948</div>
<div class="c r" style="left:1112px;top:507.5px;width:80.5px">904</div>
<div class="c r" style="left:1195px;top:507.5px;width:80.5px">1,273</div>
<div class="c r" style="left:1278px;top:507.5px;width:80.5px">1,359</div>
<div class="c r b" style="left:1361px;top:507.5px;width:83px">9,959</div>
<div class="c b t31" style="left:124px;top:537.5px">Total Expenses</div>
<div class="c r b t31" style="left:365px;top:537.5px;width:80.5px">184,023</div>
<div class="c r b t31" style="left:448px;top:537.5px;width:80.5px">177,808</div>
<div class="c r b t31" style="left:531px;top:537.5px;width:80.5px">174,501</div>
<div class="c r b t31" style="left:614px;top:537.5px;width:80.5px">164,876</div>
<div class="c r b t31" style="left:697px;top:537.5px;width:80.5px">136,673</div>
<div class="c r b t31" style="left:780px;top:537.5px;width:80.5px">215,283</div>
<div class="c r b t31" style="left:863px;top:537.5px;width:80.5px">213,732</div>
<div class="c r b t31" style="left:946px;top:537.5px;width:80.5px">213,127</div>
<div class="c r b t31" style="left:1029px;top:537.5px;width:80.5px">178,119</div>
<div class="c r b t31" style="left:1112px;top:537.5px;width:80.5px">162,591</div>
<div class="c r b t31" style="left:1195px;top:537.5px;width:80.5px">185,806</div>
<div class="c r b t31" style="left:1278px;top:537.5px;width:80.5px">232,284</div>
<div class="bar2" style="left:1362px;top:539.5px;width:27px;height:15px"></div>
<div class="c r b t31" style="left:1361px;top:537.5px;width:83px">1,820,732</div>
<div class="tbord" style="left:46px;top:123.0px;width:1401px;height:434.5px"></div>
<div class="tbody" style="left:46px;top:564.0px;width:1401px;height:39.0px"></div>
<div class="tbord" style="left:46px;top:564.0px;width:1401px;height:45.0px"></div>
<div class="c b ctr up" style="left:50px;top:565.0px;width:315px">Total Other Expenses Last Year</div>
<div class="c r up" style="left:365px;top:565.0px;width:80.5px">0</div>
<div class="c r up" style="left:448px;top:565.0px;width:80.5px">0</div>
<div class="c r up" style="left:531px;top:565.0px;width:80.5px">0</div>
<div class="c r up" style="left:614px;top:565.0px;width:80.5px">0</div>
<div class="c r up" style="left:697px;top:565.0px;width:80.5px">0</div>
<div class="c r up" style="left:780px;top:565.0px;width:80.5px">0</div>
<div class="c r up" style="left:863px;top:565.0px;width:80.5px">0</div>
<div class="c r up" style="left:946px;top:565.0px;width:80.5px">0</div>
<div class="c r up" style="left:1029px;top:565.0px;width:80.5px">0</div>
<div class="c r up" style="left:1112px;top:565.0px;width:80.5px">0</div>
<div class="c r up" style="left:1195px;top:565.0px;width:80.5px">0</div>
<div class="c r up" style="left:1278px;top:565.0px;width:80.5px">0</div>
<div class="c r up" style="left:1361px;top:565.0px;width:83px">0</div>
<div class="c b ctr up" style="left:50px;top:584.5px;width:315px">Total Expenses Budget</div>
<div class="c r up" style="left:365px;top:584.5px;width:80.5px">184,023</div>
<div class="c r up" style="left:448px;top:584.5px;width:80.5px">177,808</div>
<div class="c r up" style="left:531px;top:584.5px;width:80.5px">174,501</div>
<div class="c r up" style="left:614px;top:584.5px;width:80.5px">164,876</div>
<div class="c r up" style="left:697px;top:584.5px;width:80.5px">136,673</div>
<div class="c r up" style="left:780px;top:584.5px;width:80.5px">215,283</div>
<div class="c r up" style="left:863px;top:584.5px;width:80.5px">213,732</div>
<div class="c r up" style="left:946px;top:584.5px;width:80.5px">213,127</div>
<div class="c r up" style="left:1029px;top:584.5px;width:80.5px">178,119</div>
<div class="c r up" style="left:1112px;top:584.5px;width:80.5px">162,591</div>
<div class="c r up" style="left:1195px;top:584.5px;width:80.5px">185,806</div>
<div class="c r up" style="left:1278px;top:584.5px;width:80.5px">232,284</div>
<div class="c r up" style="left:1361px;top:584.5px;width:83px">1,820,732</div>
 </div>
 <div id="vs">
  <div style="left:5px;top:1px;width:14px;height:14px;background:#fff;border:1px solid #c4c4c4"></div>
  <svg style="left:8px;top:5px" width="8" height="6" viewBox="0 0 8 6"><path d="M0.500 5.500h7L4 0.500z" fill="#333"/></svg>
  <div style="left:5px;top:15px;width:14px;height:110px;background:#fff;border:1px solid #c4c4c4"></div>
  <div style="left:5px;bottom:1px;width:14px;height:14px;background:#fff;border:1px solid #c4c4c4"></div>
  <svg style="left:8px;bottom:5px" width="8" height="6" viewBox="0 0 8 6"><path d="M0.500 0.500h7L4 5.500z" fill="#333"/></svg>
 </div>
 <div id="tabs">
  <svg style="left:26px;top:9px" width="7" height="10" viewBox="0 0 7 10"><path d="M5.500 1L1.500 5l4 4" stroke="#c2c2c2" stroke-width="1.600" fill="none"/></svg>
  <svg style="left:54px;top:9px" width="7" height="10" viewBox="0 0 7 10"><path d="M1.500 1l4 4-4 4" stroke="#c2c2c2" stroke-width="1.600" fill="none"/></svg>
  <div style="left:100px;top:-1px;width:66px;height:26px;background:#fff;border-bottom:3px solid #217346;text-align:center;line-height:24px;font-size:13px;font-weight:700;color:#217346">OTExp</div>
  <span style="left:178px;top:0;line-height:24px;font-size:13px;color:#555;white-space:nowrap">Directions</span>
  <div style="left:254px;top:3px;width:1px;height:20px;background:#bdbdbd"></div>
  <div style="left:964px;top:6px;width:2px;height:15px;border-left:2px dotted #aaa"></div>
  <div style="left:976px;top:4px;width:660px;height:19px;background:#e4e4e4"></div>
  <div style="left:977px;top:4px;width:17px;height:19px;background:#fff;border:1px solid #c4c4c4"></div>
  <svg style="left:982px;top:9px" width="6" height="9" viewBox="0 0 6 9"><path d="M5.500 0.500v8L0.500 4.500z" fill="#333"/></svg>
  <div style="left:993px;top:4px;width:264px;height:19px;background:#fff;border:1px solid #c4c4c4"></div>
  <div style="left:1616px;top:4px;width:17px;height:19px;background:#fff;border:1px solid #c4c4c4"></div>
  <svg style="left:1622px;top:9px" width="6" height="9" viewBox="0 0 6 9"><path d="M0.500 0.500v8L5.500 4.500z" fill="#333"/></svg>
 </div>
</div>
<div id="dark" style="top:calc(254px + 603.0px + 28px)">
 <span style="left:703px;top:0;line-height:27px;font-size:15.600px;color:#656e7b;white-space:nowrap">Spreading and Line item details</span>
 <svg style="left:932px;top:9px" width="12" height="8" viewBox="0 0 14 9"><path d="M1.500 7.500l5.500-5.500 5.500 5.500" stroke="#b4b9c1" stroke-width="2.600" fill="none"/></svg>
</div>

</div>
</body></html>
